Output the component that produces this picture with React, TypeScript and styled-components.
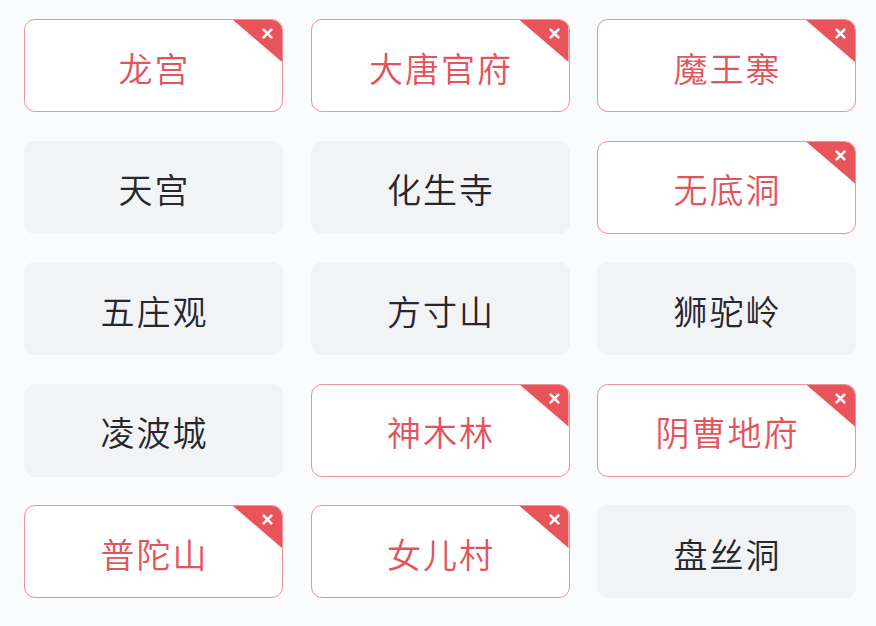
import styled, { createGlobalStyle } from 'styled-components';

const GlobalStyle = createGlobalStyle`
  html, body {
    margin: 0;
    padding: 0;
    background: #fafbfc;
  }
  body {
    font-family: "Noto Sans CJK SC", "Noto Sans", sans-serif;
  }
`;

type Sect = { name: string, selected: boolean };

const sects: Sect[] = [
  { name: '龙宫', selected: true },
  { name: '大唐官府', selected: true },
  { name: '魔王寨', selected: true },
  { name: '天宫', selected: false },
  { name: '化生寺', selected: false },
  { name: '无底洞', selected: true },
  { name: '五庄观', selected: false },
  { name: '方寸山', selected: false },
  { name: '狮驼岭', selected: false },
  { name: '凌波城', selected: false },
  { name: '神木林', selected: true },
  { name: '阴曹地府', selected: true },
  { name: '普陀山', selected: true },
  { name: '女儿村', selected: true },
  { name: '盘丝洞', selected: false },
];

const Page = styled.div`
  width: 876px;
  height: 626px;
  box-sizing: border-box;
  padding: 19px 0 0 24px;
  background: #fafbfc;
  overflow: hidden;
`;

const Grid = styled.div`
  display: grid;
  grid-template-columns: repeat(3, 259px);
  grid-auto-rows: 93px;
  column-gap: 27.5px;
  row-gap: 28.5px;
`;

const Card = styled.div<{ selected: boolean }>`
  position: relative;
  box-sizing: border-box;
  display: flex;
  align-items: center;
  justify-content: center;
  border-radius: 11px;
  overflow: hidden;
  background: ${({ selected }) => (selected ? '#ffffff' : '#f2f3f5')};
  border: 1px solid ${({ selected }) => (selected ? '#eb9396' : '#f2f3f5')};
  color: ${({ selected }) => (selected ? '#e4535b' : '#26262c')};
  font-size: 34px;
  font-weight: 350;
  line-height: 1;
  letter-spacing: 2px;
  padding: 4px 0 0 2px;
`;

const Corner = styled.div`
  position: absolute;
  top: 0;
  right: 0;
  width: 49px;
  height: 42px;
  background: #e9535a;
  clip-path: polygon(0 0, 100% 0, 100% 100%);
`;

const CloseMark = styled.svg`
  position: absolute;
  top: 8px;
  right: 9px;
  width: 11px;
  height: 11px;
`;

export default function App() {
  return (
    <>
      <GlobalStyle />
      <Page>
        <Grid>
          {sects.map((s) => (
            <Card key={s.name} selected={s.selected}>
              {s.name}
              {s.selected && (
                <>
                  <Corner />
                  <CloseMark viewBox="0 0 10 10">
                    <path d="M1.5 1.5 L8.5 8.5 M8.5 1.5 L1.5 8.5" stroke="#ffffff" strokeWidth="2.4" strokeLinecap="round" />
                  </CloseMark>
                </>
              )}
            </Card>
          ))}
        </Grid>
      </Page>
    </>
  );
}
